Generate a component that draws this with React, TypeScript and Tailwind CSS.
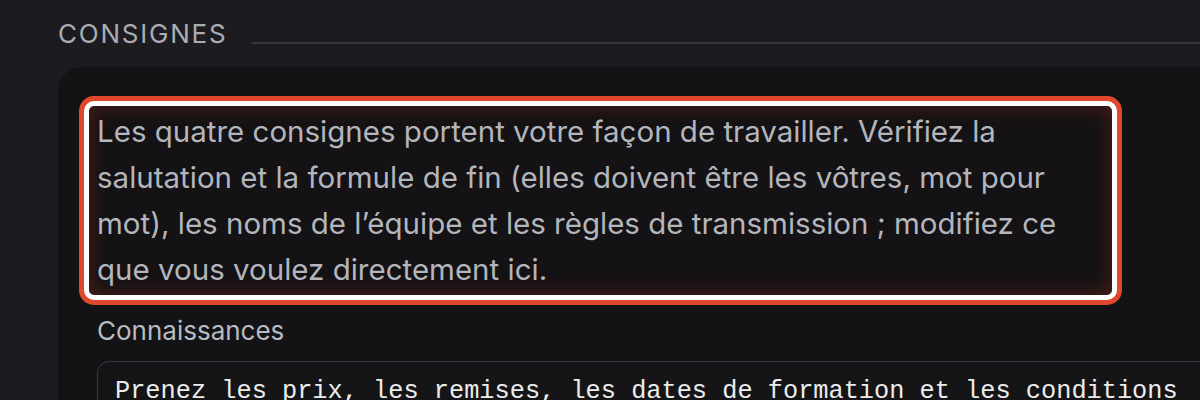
export default function App() {
  return (
    <div className="h-[400px] w-[1200px] overflow-hidden bg-[#1c1c20] pl-[58px] pt-[18px] font-['Inter','Noto_Sans',sans-serif]">
      <div className="flex items-end gap-[25px]">
        <h2 className="text-[26px] leading-[32px] tracking-[0.068em] text-[#a9adb4]">CONSIGNES</h2>
        <div className="mb-[6px] h-[2px] flex-1 bg-[#36363d]" />
      </div>

      <div className="mt-[17px] w-[1200px] rounded-tl-[24px] bg-[#131315] pl-[39px] pt-[34px]">
        {/* highlighted field */}
        <div className="-ml-[13px] w-[1033px] rounded-[10px] border-[5px] border-white bg-[#141214] pl-[8px] pr-[22px] pt-[2px] pb-[3px] shadow-[0_0_0_5px_#e0482e,inset_0_0_20px_rgba(120,38,26,0.6)]">
          <p className="text-[29.5px] leading-[46px] text-[#b3b6bc]">
            Les quatre consignes portent votre façon de travailler. Vérifiez la salutation et la formule de fin (elles
            doivent être les vôtres, mot pour mot), les noms de l’équipe et les règles de transmission ; modifiez ce
            que vous voulez directement ici.
          </p>
        </div>

        <div className="mt-[15px] text-[26px] leading-[32px] text-[#b8bbc1]">Connaissances</div>

        <div className="mt-[14px] w-[1150px] rounded-t-[12px] border border-[#3a3a41] bg-[#151517] pl-[17px] pt-[12px] pb-[20px]">
          <div className="whitespace-nowrap font-['Liberation_Mono','DejaVu_Sans_Mono',monospace] text-[25.3px] leading-[36px] text-[#ececec]">
            Prenez les prix, les remises, les dates de formation et les conditions
          </div>
        </div>
      </div>
    </div>
  );
}
